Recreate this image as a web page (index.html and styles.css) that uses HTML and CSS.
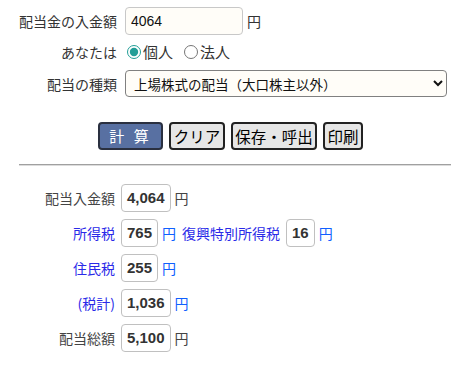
FILE: index.html
```html
<!doctype html>
<html>
<head>
<meta charset="utf-8">
<title>配当金の計算</title>
    <link rel="stylesheet" href="styles.css">
</head>

<body>
    <!-- 入力欄 -->
    <div class="inputArea">
        <div class="row row1">
            <label class="lbl">配当金の入金額</label>
            <input type="text" class="money" value="4064">
            <span class="yen">円</span>
        </div>
        <div class="row row2">
            <span class="lbl">あなたは</span>
            <label class="rad"><input type="radio" name="who" checked>個人</label>
            <label class="rad"><input type="radio" name="who">法人</label>
        </div>
        <div class="row row3">
            <label class="lbl">配当の種類</label>
            <select class="kind">
                <option>上場株式の配当（大口株主以外）</option>
                <option>上場株式の配当（大口株主）</option>
                <option>非上場株式の配当</option>
            </select>
        </div>
    </div>

    <!-- ボタン -->
    <div class="btnBox">
        <button class="calc">計&nbsp;算</button>
        <button class="b1">クリア</button>
        <button class="b2">保存・呼出</button>
        <button class="b3">印刷</button>
    </div>

    <div class="line"></div>

    <!-- 計算結果 -->
    <div class="result">
        <div class="rrow">
            <span class="rl">配当入金額</span>
            <span class="box">4,064</span>
            <span class="ry">円</span>
        </div>
        <div class="rrow blue">
            <span class="rl">所得税</span>
            <span class="box">765</span>
            <span class="ry">円</span>
            <span class="sub">復興特別所得税</span>
            <span class="box">16</span>
            <span class="ry">円</span>
        </div>
        <div class="rrow blue">
            <span class="rl">住民税</span>
            <span class="box">255</span>
            <span class="ry">円</span>
        </div>
        <div class="rrow blue">
            <span class="rl">(税計)</span>
            <span class="box">1,036</span>
            <span class="ry">円</span>
        </div>
        <div class="rrow">
            <span class="rl">配当総額</span>
            <span class="box">5,100</span>
            <span class="ry">円</span>
        </div>
    </div>
</body>
</html>
```

FILE: styles.css
```css
body{
    margin: 0;
    padding-top: 7px;
    background: #fff;
    color: #333;
    font-family: "Noto Sans CJK JP", "Liberation Sans", sans-serif;
    font-size: 14px;
    line-height: 20px;
}

/* 入力欄 */
.row{
    display: flex;
    align-items: center;
}
.lbl{
    width: 109px;
    margin-left: 8px;
    margin-right: 8px;
    text-align: right;
}
.row1{
    height: 28px;
}
.row2{
    height: 24px;
    margin-top: 5px;
}
.row3{
    height: 27px;
    margin-top: 6px;
}
.money{
    box-sizing: border-box;
    width: 118px;
    height: 28px;
    padding: 0 5px;
    border: 1px solid #c8c8c8;
    border-radius: 4px;
    background: #fffdf8;
    font-family: "Liberation Sans", sans-serif;
    font-size: 14px;
    color: #111;
}
.yen{
    margin-left: 4px;
}
.rad{
    display: flex;
    align-items: center;
    margin-right: 9px;
    font-size: 15px;
}
.rad input{
    margin: 0 2px 0 2px;
    width: 14px;
    height: 14px;
    accent-color: #229e97;
}
.kind{
    box-sizing: border-box;
    width: 322px;
    height: 27px;
    padding-left: 4px;
    border: 1px solid #808080;
    border-radius: 4px;
    background: #fffdf8;
    color: #111;
    font-family: "Noto Sans CJK JP", sans-serif;
    font-size: 13.5px;
}

/* ボタン */
.btnBox{
    display: flex;
    gap: 6px;
    margin-top: 25px;
    padding-left: 98px;
}
.btnBox button{
    box-sizing: border-box;
    height: 28px;
    padding: 0;
    border: 2px solid #222;
    border-radius: 4px;
    background: #e6e6e6;
    color: #000;
    font-family: "Noto Sans CJK JP", sans-serif;
    font-size: 15.5px;
    line-height: 20px;
}
.btnBox .calc{
    width: 65px;
    background: #5870a2;
    color: #fff;
    border-color: #2a3040;
    font-size: 15px;
    letter-spacing: 3px;
}
.btnBox .b1{
    width: 56px;
}
.btnBox .b2{
    width: 86px;
}
.btnBox .b3{
    width: 40px;
}

.line{
    margin: 14px 19px 0 19px;
    border-top: 1px solid #a0a0a0;
    border-bottom: 1px solid #dcdcdc;
}

/* 計算結果 */
.result{
    margin-top: 18px;
}
.rrow{
    display: flex;
    align-items: center;
    height: 28px;
    margin-bottom: 7px;
    color: #444;
}
.rl{
    width: 108px;
    margin-left: 7px;
    margin-right: 6px;
    text-align: right;
}
.box{
    box-sizing: border-box;
    height: 28px;
    padding: 0 5px;
    border: 1px solid #c0c0c0;
    border-radius: 4px;
    font-family: "Liberation Sans", sans-serif;
    font-weight: bold;
    font-size: 15px;
    line-height: 26px;
    color: #333;
}
.ry{
    margin-left: 4px;
}
.blue .rl,
.blue .sub{
    color: #2a2ae8;
}
.blue .ry{
    color: #1060ff;
}
.sub{
    margin-left: 6px;
    margin-right: 6px;
}
```
